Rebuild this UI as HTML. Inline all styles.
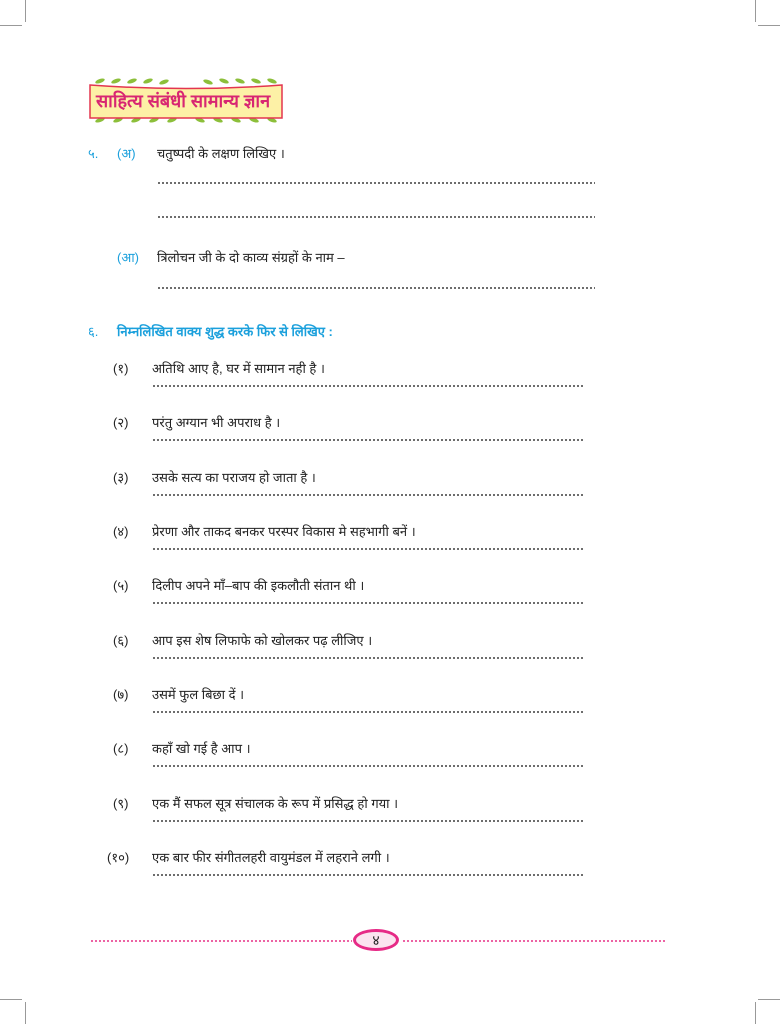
<!DOCTYPE html>
<html><head><meta charset="utf-8"><style>
body{margin:0;width:780px;height:1024px;background:#fff;position:relative;overflow:hidden;font-family:"Liberation Sans","Noto Sans CJK SC",sans-serif;color:#222;font-size:13px}
.a{position:absolute;white-space:nowrap;line-height:16px}
.d{position:absolute;height:2px;background:radial-gradient(circle,#444 0.8px,transparent 1.1px) 0 0/4px 2px repeat-x}
.p{background:radial-gradient(circle,#e8388a 0.8px,transparent 1.1px) 0 0/4px 2px repeat-x}
.c{color:#1ba0dc}
.m{position:absolute;background:#999}
</style></head><body>
<div class="m" style="left:25px;top:0;width:1px;height:22px"></div>
<div class="m" style="left:0;top:25px;width:22px;height:1px"></div>
<div class="m" style="left:755px;top:0;width:1px;height:22px"></div>
<div class="m" style="left:758px;top:25px;width:22px;height:1px"></div>
<div class="m" style="left:25px;top:1002px;width:1px;height:22px"></div>
<div class="m" style="left:0;top:999px;width:22px;height:1px"></div>
<div class="m" style="left:755px;top:1002px;width:1px;height:22px"></div>
<div class="m" style="left:758px;top:999px;width:22px;height:1px"></div>

<svg style="position:absolute;left:86px;top:76px" width="200" height="50">
<g fill="#8cbf3a"><ellipse cx="14" cy="5" rx="5" ry="2" transform="rotate(-20 14 5)"/><ellipse cx="30" cy="5" rx="5" ry="2" transform="rotate(-20 30 5)"/><ellipse cx="46" cy="5" rx="5" ry="2" transform="rotate(-20 46 5)"/><ellipse cx="62" cy="5" rx="5" ry="2" transform="rotate(-20 62 5)"/><ellipse cx="78" cy="6" rx="5" ry="2" transform="rotate(-20 78 6)"/><ellipse cx="122" cy="6" rx="5" ry="2" transform="rotate(20 122 6)"/><ellipse cx="138" cy="5" rx="5" ry="2" transform="rotate(20 138 5)"/><ellipse cx="154" cy="5" rx="5" ry="2" transform="rotate(20 154 5)"/><ellipse cx="170" cy="5" rx="5" ry="2" transform="rotate(20 170 5)"/><ellipse cx="186" cy="5" rx="5" ry="2" transform="rotate(20 186 5)"/>
<ellipse cx="14" cy="44" rx="5" ry="2" transform="rotate(-20 14 44)"/><ellipse cx="32" cy="44" rx="5" ry="2" transform="rotate(-20 32 44)"/><ellipse cx="50" cy="44" rx="5" ry="2" transform="rotate(-20 50 44)"/><ellipse cx="68" cy="44" rx="5" ry="2" transform="rotate(-20 68 44)"/><ellipse cx="86" cy="44" rx="5" ry="2" transform="rotate(-20 86 44)"/><ellipse cx="114" cy="44" rx="5" ry="2" transform="rotate(20 114 44)"/><ellipse cx="132" cy="44" rx="5" ry="2" transform="rotate(20 132 44)"/><ellipse cx="150" cy="44" rx="5" ry="2" transform="rotate(20 150 44)"/><ellipse cx="168" cy="44" rx="5" ry="2" transform="rotate(20 168 44)"/><ellipse cx="186" cy="44" rx="5" ry="2" transform="rotate(20 186 44)"/></g>
<path d="M4 9 Q100 16 196 9 L196 42 L4 42 Z" fill="#fdf1a6" stroke="#e3354f" stroke-width="1.5"/>
</svg>
<div class="a" style="left:96px;top:89px;font-size:18px;line-height:24px;color:#d82672;font-weight:bold">साहित्य संबंधी सामान्य ज्ञान</div>

<div class="a c" style="left:88px;top:146px">५.</div>
<div class="a c" style="left:117px;top:146px">(अ)</div>
<div class="a" style="left:157px;top:146px">चतुष्पदी के लक्षण लिखिए ।</div>
<div class="d" style="left:157px;top:182px;width:438px"></div>
<div class="d" style="left:157px;top:216px;width:438px"></div>
<div class="a c" style="left:117px;top:250px">(आ)</div>
<div class="a" style="left:157px;top:250px">त्रिलोचन जी के दो काव्य संग्रहों के नाम –</div>
<div class="d" style="left:157px;top:287px;width:438px"></div>

<div class="a c" style="left:88px;top:324px">६.</div>
<div class="a c" style="left:117px;top:324px;font-weight:bold">निम्नलिखित वाक्य शुद्ध करके फिर से लिखिए :</div>

<div class="a" style="left:113px;top:361px">(१)</div><div class="a" style="left:152px;top:361px">अतिथि आए है, घर में सामान नही है ।</div><div class="d" style="left:152px;top:385px;width:433px"></div>
<div class="a" style="left:113px;top:415px">(२)</div><div class="a" style="left:152px;top:415px">परंतु अग्यान भी अपराध है ।</div><div class="d" style="left:152px;top:439px;width:433px"></div>
<div class="a" style="left:113px;top:470px">(३)</div><div class="a" style="left:152px;top:470px">उसके सत्य का पराजय हो जाता है ।</div><div class="d" style="left:152px;top:494px;width:433px"></div>
<div class="a" style="left:113px;top:524px">(४)</div><div class="a" style="left:152px;top:524px">प्रेरणा और ताकद बनकर परस्पर विकास मे सहभागी बनें ।</div><div class="d" style="left:152px;top:548px;width:433px"></div>
<div class="a" style="left:113px;top:578px">(५)</div><div class="a" style="left:152px;top:578px">दिलीप अपने माँ–बाप की इकलौती संतान थी ।</div><div class="d" style="left:152px;top:602px;width:433px"></div>
<div class="a" style="left:113px;top:633px">(६)</div><div class="a" style="left:152px;top:633px">आप इस शेष लिफाफे को खोलकर पढ़ लीजिए ।</div><div class="d" style="left:152px;top:657px;width:433px"></div>
<div class="a" style="left:113px;top:687px">(७)</div><div class="a" style="left:152px;top:687px">उसमें फुल बिछा दें ।</div><div class="d" style="left:152px;top:711px;width:433px"></div>
<div class="a" style="left:113px;top:741px">(८)</div><div class="a" style="left:152px;top:741px">कहाँ खो गई है आप ।</div><div class="d" style="left:152px;top:765px;width:433px"></div>
<div class="a" style="left:113px;top:796px">(९)</div><div class="a" style="left:152px;top:796px">एक मैं सफल सूत्र संचालक के रूप में प्रसिद्ध हो गया ।</div><div class="d" style="left:152px;top:820px;width:433px"></div>
<div class="a" style="left:107px;top:850px">(१०)</div><div class="a" style="left:152px;top:850px">एक बार फीर संगीतलहरी वायुमंडल में लहराने लगी ।</div><div class="d" style="left:152px;top:874px;width:433px"></div>

<div class="d p" style="left:90px;top:940px;width:262px"></div>
<div class="d p" style="left:402px;top:940px;width:263px"></div>
<div style="position:absolute;left:353px;top:929px;width:46px;height:22px;border-radius:50%;background:#fbe3ef;border:3px solid #e62a86;box-sizing:border-box"></div>
<div class="a" style="left:354px;top:932px;width:44px;text-align:center;font-size:14px">४</div>
</body></html>
